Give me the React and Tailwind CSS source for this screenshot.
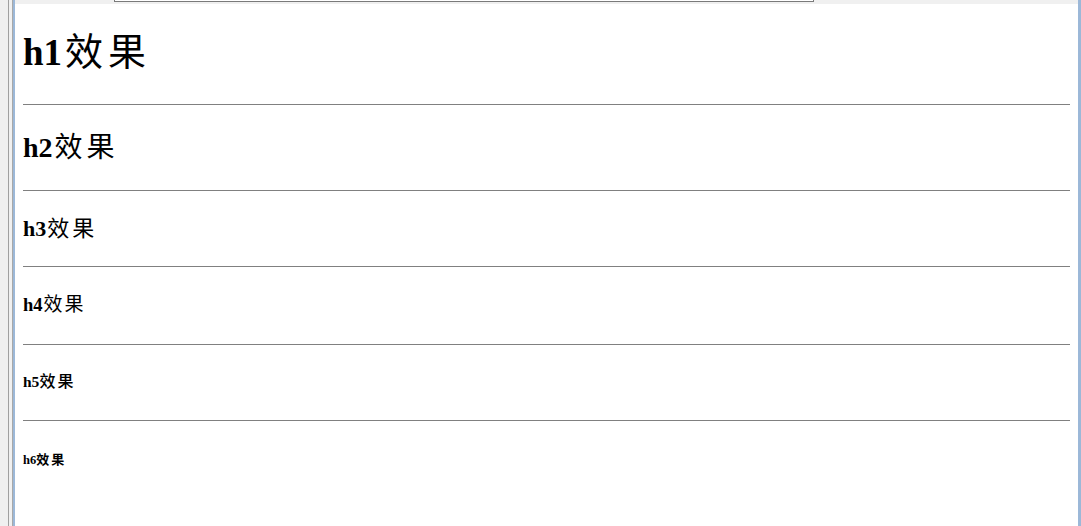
function Rule({ mt }) {
  return <div className={`h-px bg-[#808080] ${mt}`} />
}

export default function App() {
  return (
    <div className="flex w-[1081px] h-[526px] overflow-hidden bg-white">
      {/* window frame on the left */}
      <div className="w-[8px] bg-[#f0f0f0]" />
      <div className="w-px bg-[#a0a0a0]" />
      <div className="w-[3px] bg-[#f0f0f0]" />
      <div className="w-px bg-[#a8a8a8]" />
      <div className="w-[2px] bg-[#9cb8d8]" />

      <div className="flex-1 flex flex-col">
        {/* strip under the address box */}
        <div className="h-[4px] bg-[#f0f0f0] flex items-start">
          <div className="ml-[99px] w-[700px] h-[2px] bg-white border-b border-x border-[#7a7a7a]" />
        </div>

        <div className="px-[8px] text-black font-['Liberation_Serif',serif]">
          <h1 className="mt-[25px] h-[40px] leading-[40px] text-[37px] font-bold">
            h1<span className="ml-[3px] font-['Noto_Sans_CJK_SC',sans-serif] font-normal text-[38px] tracking-[5px]">效果</span>
          </h1>
          <Rule mt="mt-[35px]" />
          <h2 className="mt-[25px] h-[30px] leading-[30px] text-[28px] font-bold">
            h2<span className="ml-[2px] font-['Noto_Sans_CJK_SC',sans-serif] font-normal text-[28px] tracking-[4px]">效果</span>
          </h2>
          <Rule mt="mt-[30px]" />
          <h3 className="mt-[23px] h-[24px] leading-[24px] text-[22px] font-bold">
            h3<span className="ml-[1px] font-['Noto_Sans_CJK_SC',sans-serif] font-normal text-[22px] tracking-[3px]">效果</span>
          </h3>
          <Rule mt="mt-[28px]" />
          <h4 className="mt-[26px] h-[20px] leading-[20px] text-[18.5px] font-bold">
            h4<span className="ml-[1px] font-['Noto_Sans_CJK_SC',sans-serif] font-normal text-[19px] tracking-[2px]">效果</span>
          </h4>
          <Rule mt="mt-[31px]" />
          <h5 className="mt-[27px] h-[16px] leading-[16px] text-[15.5px] font-bold">
            h5<span className="font-['Noto_Sans_CJK_SC',sans-serif] font-medium text-[16px] tracking-[2px]">效果</span>
          </h5>
          <Rule mt="mt-[32px]" />
          <h6 className="mt-[31px] h-[14px] leading-[14px] text-[12.5px] font-bold">
            h6<span className="font-['Noto_Sans_CJK_SC',sans-serif] font-bold text-[13px] tracking-[2px]">效果</span>
          </h6>
        </div>
      </div>

      {/* window frame on the right */}
      <div className="w-[3px] bg-[#9cb8d8]" />
    </div>
  )
}
